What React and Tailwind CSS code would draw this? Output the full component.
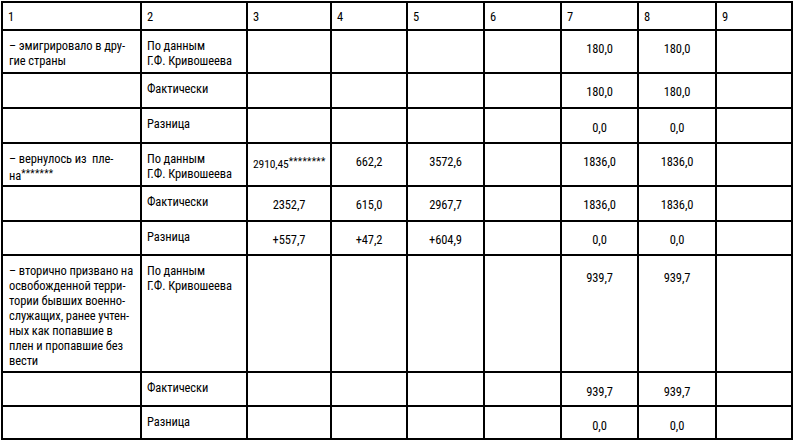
import React from 'react';

const widths = [139, 106, 84, 76, 77, 77, 77, 78, 76];

const KRIV = (
    <>
        По данным
        <br />
        Г.Ф. Кривошеева
    </>
);

const Star = ({ n }) => (
    <span className="text-[10px] tracking-[0.3px] align-[3px]">{'*'.repeat(n)}</span>
);

// each row: height, first column text, second column text, values for columns 3..9, top pad of the numbers
const rows = [
    { h: 43, label: <>– эмигрировало в дру-<br />гие страны</>, kind: KRIV, vals: ['', '', '', '', '180,0', '180,0', ''], np: 'pt-[10px]' },
    { h: 35, label: null, kind: 'Фактически', vals: ['', '', '', '', '180,0', '180,0', ''], np: 'pt-[10px]' },
    { h: 35, label: null, kind: 'Разница', vals: ['', '', '', '', '0,0', '0,0', ''], np: 'pt-[11px]' },
    {
        h: 43,
        label: <>– вернулось из&nbsp; пле-<br />на<Star n={7} /></>,
        kind: KRIV,
        vals: [<span className="text-[11.5px]">2910,45<Star n={8} /></span>, '662,2', '3572,6', '', '1836,0', '1836,0', ''],
        np: 'pt-[10px]',
    },
    { h: 35, label: null, kind: 'Фактически', vals: ['2352,7', '615,0', '2967,7', '', '1836,0', '1836,0', ''], np: 'pt-[10px]' },
    { h: 34, label: null, kind: 'Разница', vals: ['+557,7', '+47,2', '+604,9', '', '0,0', '0,0', ''], np: 'pt-[10px]' },
    {
        h: 117,
        label: (
            <>
                – вторично призвано на<br />
                освобожденной терри-<br />
                тории бывших военно-<br />
                служащих, ранее учтен-<br />
                ных как попавшие в<br />
                плен и пропавшие без<br />
                вести
            </>
        ),
        kind: KRIV,
        vals: ['', '', '', '', '939,7', '939,7', ''],
        np: 'pt-[14px]',
    },
    { h: 34, label: null, kind: 'Фактически', vals: ['', '', '', '', '939,7', '939,7', ''], np: 'pt-[11px]' },
    { h: 33, label: null, kind: 'Разница', vals: ['', '', '', '', '0,0', '0,0', ''], np: 'pt-[11px]' },
];

const base = 'border-2 border-black align-top px-[5px] whitespace-nowrap overflow-hidden';

export default function App() {
    return (
        <div className="w-[793px] h-[443px] bg-white text-black pt-[1px] pl-[1px] font-['Roboto',sans-serif]">
            <table className="table-fixed border-collapse text-[12.5px] leading-[15px] font-stretch-75% font-[450] tracking-[-0.1px] w-[790px]">
                <colgroup>
                    {widths.map((w, i) => (
                        <col key={i} style={{ width: w }} />
                    ))}
                </colgroup>
                <tbody>
                    <tr className="h-[28px]">
                        {widths.map((_, i) => (
                            <td key={i} className={base + ' pt-[6px]'}>
                                {i + 1}
                            </td>
                        ))}
                    </tr>
                    {rows.map((r, ri) => (
                        <tr key={ri} style={{ height: r.h }}>
                            <td className={base + ' pt-[7px] pl-[6px]'}>{r.label}</td>
                            <td className={base + ' pt-[7px]'}>{r.kind}</td>
                            {r.vals.map((v, vi) => (
                                <td key={vi} className={base + ' text-center ' + r.np}>
                                    {v}
                                </td>
                            ))}
                        </tr>
                    ))}
                </tbody>
            </table>
        </div>
    );
}
